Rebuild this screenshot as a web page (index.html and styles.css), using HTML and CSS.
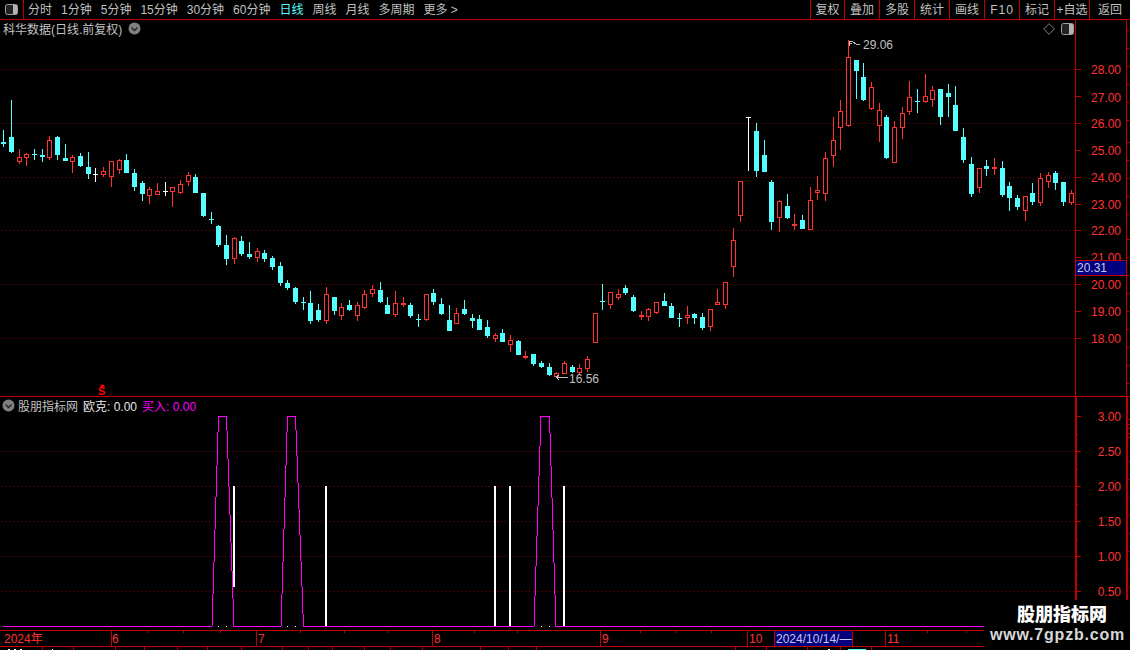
FILE: index.html
```html
<!DOCTYPE html>
<html lang="zh">
<head>
<meta charset="utf-8">
<title>科华数据</title>
<link rel="stylesheet" href="styles.css">
</head>
<body>
<div class="app">
  <header class="toolbar">
    <div class="toggle-cell">
      <svg class="icon-toggle" width="13" height="11" viewBox="0 0 13 11"><rect x="0.5" y="0.5" width="12" height="10" rx="2" fill="#222" stroke="#a0a0a0"/><rect x="8" y="1" width="4" height="9" fill="#b4b4b4"/></svg>
    </div>
    <nav class="periods">
      <span>分时</span><span>1分钟</span><span>5分钟</span><span>15分钟</span><span>30分钟</span><span>60分钟</span><span class="active">日线</span><span>周线</span><span>月线</span><span>多周期</span><span>更多 &gt;</span>
    </nav>
    <nav class="actions">
      <span>复权</span><span>叠加</span><span>多股</span><span>统计</span><span>画线</span><span class="wide">F10</span><span>标记</span><span>+自选</span><span>返回</span>
    </nav>
  </header>

  <section class="pane price-pane">
    <div class="legend">
      <span>科华数据(日线.前复权)</span>
      <svg class="chev" width="13" height="13" viewBox="0 0 13 13"><circle cx="6.5" cy="6.5" r="6" fill="#808080"/><path d="M3.5 5.5l3 3 3-3" fill="none" stroke="#222" stroke-width="1.3"/></svg>
    </div>
    <div class="pane-tools">
      <svg width="12" height="12" viewBox="0 0 12 12"><path d="M6 .7L11.3 6 6 11.3.7 6z" fill="none" stroke="#808080"/></svg>
      <svg width="13" height="12" viewBox="0 0 13 12"><rect x="0.5" y="0.5" width="12" height="11" rx="2" fill="#222" stroke="#a0a0a0"/><rect x="8" y="1" width="4" height="10" fill="#b4b4b4"/></svg>
    </div>
    <svg class="chart" width="1130" height="377" viewBox="0 20 1130 377">
      <g class="grid">
        <line x1="1" x2="1075" y1="69.5" y2="69.5"/><line x1="1" x2="1075" y1="123.5" y2="123.5"/><line x1="1" x2="1075" y1="177.5" y2="177.5"/><line x1="1" x2="1075" y1="230.5" y2="230.5"/><line x1="1" x2="1075" y1="284.5" y2="284.5"/><line x1="1" x2="1075" y1="338.5" y2="338.5"/>
      </g>
      <g id="candles"></g>
      <g class="axis">
        <path d="M1075.5 20V397M1126.5 20V397"/>
        <path d="M1075 69.5h6M1075 96.5h6M1075 123.5h6M1075 150.5h6M1075 177.5h6M1075 204.5h6M1075 230.5h6M1075 257.5h6M1075 284.5h6M1075 311.5h6M1075 338.5h6"/>
        <path d="M1127 30.5h2M1127 48.5h2M1127 66.5h2M1127 84.5h2M1127 102.5h2M1127 120.5h2M1127 142.5h4M1127 160.5h2M1127 178.5h2M1127 196.5h2M1127 214.5h2M1127 239.5h4M1127 257.5h2M1127 275.5h2M1127 293.5h2M1127 311.5h2M1127 329.5h2M1127 347.5h2M1127 365.5h2M1127 383.5h2"/>
      </g>
      <g class="scale">
        <text x="1121" y="74">28.00</text><text x="1121" y="102">27.00</text><text x="1121" y="128">26.00</text><text x="1121" y="155">25.00</text><text x="1121" y="182">24.00</text><text x="1121" y="209">23.00</text><text x="1121" y="235">22.00</text><text x="1121" y="262">21.00</text><text x="1121" y="289">20.00</text><text x="1121" y="316">19.00</text><text x="1121" y="343">18.00</text>
      </g>
      <rect class="price-box" x="1075.5" y="260.5" width="51" height="15"/>
      <text class="price-now" x="1077" y="272">20.31</text>
      <path class="mark" d="M849 46V41h4M849 43h3M853 42l3 2 4 0"/>
      <text class="mark-text" x="863" y="49">29.06</text>
      <path class="mark" d="M568 377H556M556 377l3-2M556 377l3 3"/>
      <text class="mark-text" x="569" y="383">16.56</text>
      <path class="signal" d="M102 384l3 3h-2v1h-2v-1h-2z"/>
      <text class="signal-s" x="98" y="395">S</text>
      <path class="divider" d="M0 396.5H1130"/>
    </svg>
  </section>

  <section class="pane indicator-pane">
    <div class="legend">
      <svg class="chev first" width="13" height="13" viewBox="0 0 13 13"><circle cx="6.5" cy="6.5" r="6" fill="#808080"/><path d="M3.5 5.5l3 3 3-3" fill="none" stroke="#222" stroke-width="1.3"/></svg>
      <span>股朋指标网</span>
      <span class="white">欧克: 0.00</span>
      <span class="magenta">买入: 0.00</span>
    </div>
    <svg class="chart" width="1130" height="233" viewBox="0 397 1130 233">
      <g class="grid">
        <line x1="1" x2="1075" y1="451.5" y2="451.5"/><line x1="1" x2="1075" y1="486.5" y2="486.5"/><line x1="1" x2="1075" y1="521.5" y2="521.5"/><line x1="1" x2="1075" y1="556.5" y2="556.5"/><line x1="1" x2="1075" y1="591.5" y2="591.5"/>
      </g>
      <g class="bars">
        <rect x="233" y="486" width="2" height="101"/><rect x="325" y="486" width="2" height="140"/><rect x="494" y="486" width="2" height="140"/><rect x="509" y="486" width="2" height="140"/><rect x="563" y="486" width="2" height="140"/>
        <rect x="218" y="626" width="1" height="1"/><rect x="226" y="626" width="1" height="1"/><rect x="287" y="626" width="1" height="1"/><rect x="295" y="626" width="1" height="1"/><rect x="541" y="626" width="1" height="1"/><rect x="549" y="626" width="1" height="1"/>
      </g>
      <path class="line-magenta" d="M3 626.5H212L218.5 416.5H226.5L234 626.5H281L287.5 416.5H295.5L303.5 626.5H534L541 416.5H549.5L556 626.5H1130"/>
      <g class="axis thick">
        <path d="M1075.5 397V630M1126.5 397V630"/>
      </g>
      <g class="axis">
        <path d="M1075 416.5h6M1075 451.5h6M1075 486.5h6M1075 521.5h6M1075 556.5h6M1075 591.5h6M1075 434.5h3M1075 469.5h3M1075 504.5h3M1075 539.5h3M1075 574.5h3"/>
        <path d="M1127 419.5h3M1127 424.5h3M1127 428.5h3M1127 433.5h3M1127 437.5h3M1127 461.5h2M1127 479.5h2M1127 497.5h2M1127 515.5h2M1127 533.5h2M1127 551.5h2M1127 569.5h2M1127 587.5h2"/>
      </g>
      <g class="scale">
        <text x="1121" y="421">3.00</text><text x="1121" y="456">2.50</text><text x="1121" y="491">2.00</text><text x="1121" y="526">1.50</text><text x="1121" y="561">1.00</text><text x="1121" y="596">0.50</text>
      </g>
    </svg>
  </section>

  <footer class="pane date-pane">
    <svg class="chart" width="1130" height="20" viewBox="0 630 1130 20">
      <g class="axis">
        <path d="M0 630.5H1130M0 646.5H1130"/>
        <path d="M111 631V646M256.5 631V646M432.5 631V646M600.5 631V646M747.5 631V646M774.5 631V646M852.5 631V646M885.5 631V646"/>
        <path d="M147.5 631v2M183.5 631v2M220.5 631v2M300.5 631v2M344.5 631v2M388.5 631v2M474.5 631v2M517.5 631v2M640.5 631v2M675.5 631v2M711.5 631v2M927.5 631v2M966.5 631v2"/>
        <path d="M42.5 647v3M73.5 647v3M115.5 647v3M144.5 647v3M177.5 647v3M207.5 647v3M241.5 647v3M282.5 647v3M308.5 647v3M332.5 647v3M364.5 647v3M390.5 647v3M422.5 647v3M480.5 647v3M508.5 647v3M536.5 647v3M735.5 647v3M766.5 647v3M807.5 647v3M840.5 647v3M871.5 647v3"/>
      </g>
      <g class="dates">
        <text x="4" y="643">2024年</text><text x="112" y="643">6</text><text x="258" y="643">7</text><text x="434" y="643">8</text><text x="602" y="643">9</text><text x="749" y="643">10</text><text x="887" y="643">11</text>
      </g>
      <rect class="date-box" x="775" y="631" width="77" height="15"/>
      <text class="date-now" x="776" y="643">2024/10/14/—</text>
      <g class="crumbs">
        <rect x="8" y="649" width="2" height="1"/><rect x="14" y="649" width="2" height="1"/><rect x="20" y="649" width="2" height="1"/><rect x="52" y="649" width="1" height="1"/><rect x="828" y="649" width="2" height="1"/>
      </g>
      <rect class="crumb-cyan" x="848" y="649" width="18" height="1"/>
    </svg>
  </footer>

  <aside class="watermark">
    <strong>股朋指标网</strong>
    <b>www.7gpzb.com</b>
  </aside>
</div>
<script src="script.js"></script>
</body>
</html>
```

FILE: styles.css
```css
* { box-sizing: border-box; }
html, body { margin: 0; padding: 0; background: #000; }
body { font-family: "Liberation Sans", "Noto Sans CJK SC", sans-serif; font-size: 12px; color: #c0c0c0; }

.app {
  position: relative;
  width: 1130px;
  height: 650px;
  overflow: hidden;
  background: #000;
  display: flex;
  flex-direction: column;
}

.toolbar {
  flex: none;
  height: 20px;
  display: flex;
  align-items: stretch;
  border-bottom: 1px solid #c00000;
  line-height: 20px;
}
.toggle-cell {
  flex: none;
  width: 24px;
  display: flex;
  align-items: center;
  padding-left: 5px;
  padding-bottom: 1px;
  border-right: 1px solid #c00000;
}
.periods {
  flex: 1;
  display: flex;
  gap: 9px;
  padding-left: 4px;
  white-space: nowrap;
}
.periods .active { color: #54ffff; }
.actions {
  flex: none;
  width: 320px;
  display: grid;
  grid-template-columns: 34px repeat(7, 35px) 41px;
}
.actions span {
  border-left: 1px solid #c00000;
  text-align: center;
  white-space: nowrap;
}
.actions .wide { letter-spacing: 1px; }

.pane { position: relative; flex: none; }
.price-pane { height: 377px; }
.indicator-pane { height: 233px; }
.date-pane { height: 20px; }
.chart { display: block; shape-rendering: crispEdges; }

.legend {
  position: absolute;
  left: 3px;
  top: 0;
  display: flex;
  align-items: center;
  gap: 6px;
  height: 16px;
  white-space: nowrap;
}
.indicator-pane .legend { left: 2px; top: 0; height: 16px; gap: 5px; }
.indicator-pane .legend .chev.first { margin-right: -2px; }
.legend .white { color: #e6e6e6; }
.legend .magenta { color: #ff00ff; }
.chev { shape-rendering: auto; flex: none; }
.pane-tools {
  position: absolute;
  right: 56px;
  top: 3px;
  display: flex;
  gap: 6px;
  align-items: center;
}
.icon-toggle { display: block; }

.grid line { stroke: #8c0000; stroke-width: 1; stroke-dasharray: 1 3; }
.axis path { stroke: #c00000; stroke-width: 1; fill: none; }
.axis.thick path { stroke-width: 2; }
.divider { stroke: #c00000; stroke-width: 1; fill: none; }
.scale text { fill: #ff3232; font-size: 12px; text-anchor: end; shape-rendering: auto; }
.dates text { fill: #ff3232; font-size: 12px; }
.price-box { fill: #000080; stroke: #c00000; }
.price-now { fill: #c8c8e6; font-size: 12px; }
.date-box { fill: #000080; }
.date-now { fill: #c8c8e6; font-size: 12px; }
.mark { fill: none; stroke: #c0c0c0; stroke-width: 1; }
.mark-text { fill: #c0c0c0; font-size: 12px; }
.signal { fill: #ff0000; }
.signal-s { fill: #ff0000; font-size: 11px; font-weight: bold; }
.bars rect, .crumbs rect { fill: #fff; }
.crumb-cyan { fill: #54ffff; }
.line-magenta { fill: none; stroke: #ff00ff; stroke-width: 1; }

.candle-wick { stroke-width: 1; fill: none; }
.up { stroke: #ff3232; }
.down { stroke: #54ffff; }
.flat { stroke: #fff; }
.body-hollow { fill: #000; stroke: #ff3232; stroke-width: 1; }
.body-red { fill: #ff3232; }
.body-cyan { fill: #54ffff; }
.body-white { fill: #fff; }

.watermark {
  position: absolute;
  left: 984px;
  top: 600px;
  width: 146px;
  height: 50px;
  background: #000;
  display: flex;
  flex-direction: column;
  align-items: center;
  font-weight: bold;
}
.watermark strong { font-size: 18px; line-height: 24px; margin: 3px 0 -1px 10px; color: #fff; }
.watermark b { font-size: 16px; line-height: 18px; margin-left: 1px; color: #d8d8d8; letter-spacing: 0.8px; }
```

FILE: script.js
```js
// Candles measured from the reference: [zx, wickTop, wickBottom, bodyTop, bodyBottom, kind]
// Values are in 3x units relative to each group's origin.
var groups = [
  { ox: 0, oy: 90, rows: [
    [10,120,170,155,162,'c'],[34,30,188,141,186,'c'],[58,177,221,202,215,'r'],[79,190,228,193,203,'r'],
    [103,177,210,192,192,'c'],[127,177,216,195,201,'c'],[148,138,210,150,204,'r'],[172,138,210,141,195,'c'],
    [196,162,213,204,213,'c'],[217,195,249,202,215,'r'],[241,189,231,198,228,'c'],[265,186,267,231,252,'c'],
    [286,234,276,253,253,'w'],[310,231,261,244,254,'r'],[334,213,291,214,261,'r'],[358,207,252,211,239,'r'],
    [379,192,249,210,249,'c'],[403,237,303,249,291,'c'],[427,273,333,279,312,'c'],[448,291,342,298,317,'r'],
    [472,279,315,304,314,'r'],[496,276,318,303,303,'w'],[517,291,351,292,305,'r'],[541,270,312,283,308,'r'],
    [565,246,288,256,275,'r'],[586,252,309,261,309,'c'],[610,309,381,309,378,'c'],[634,366,402,388,388,'c'],
    [655,405,471,408,465,'c'],[679,435,525,465,507,'c'],[703,441,522,445,506,'r'],[724,438,498,453,492,'c'],
    [748,456,507,492,501,'c'],[772,474,516,484,503,'r'],[793,480,516,489,507,'c'],[817,498,540,504,531,'c'],
    [841,516,588,528,579,'c'],[861,570,600,579,594,'c'],[885,591,642,594,636,'c']
  ]},
  { ox: 280, oy: 270, rows: [
    [70,82,120,97,97,'c'],[91,63,162,99,153,'c'],[115,102,156,120,150,'c'],[139,51,162,72,153,'r'],
    [163,81,135,81,123,'c'],[184,99,150,112,137,'r'],[208,90,123,105,120,'c'],[232,96,153,105,137,'r'],
    [253,60,117,72,114,'r'],[277,45,81,57,72,'r'],[301,36,99,60,96,'c'],[322,81,132,105,132,'c'],
    [346,63,141,99,135,'r'],[370,81,111,99,105,'s'],[391,99,144,105,138,'c'],[415,132,171,147,147,'c'],
    [439,72,153,72,150,'r'],[460,57,105,69,96,'c'],[484,84,135,102,132,'c'],[508,105,183,150,183,'c'],
    [529,114,162,129,162,'r'],[553,90,135,117,132,'c'],[577,132,174,144,153,'c'],[598,135,180,147,180,'c'],
    [622,150,204,171,198,'c'],[646,189,216,195,207,'r'],[667,177,216,189,216,'c'],[691,195,246,210,225,'r'],
    [715,210,255,213,255,'c'],[736,243,267,258,264,'s'],[760,252,288,252,282,'c'],[784,273,294,279,291,'c'],
    [808,279,318,291,315,'c'],[829,306,324,310,321,'r'],[853,273,312,280,311,'r'],[877,285,309,291,306,'c'],
    [898,282,312,295,309,'r'],[922,258,306,267,297,'r'],[946,130,218,130,218,'r']
  ]},
  { ox: 580, oy: 110, rows: [
    [67,522,600,574,574,'c'],[91,547,597,547,586,'r'],[115,537,570,553,563,'r'],[136,525,555,534,549,'c'],
    [160,556,606,561,603,'c'],[184,603,630,615,621,'s'],[205,595,633,598,620,'r'],[229,576,612,577,608,'r'],
    [253,549,588,573,588,'c'],[274,579,624,588,624,'c'],[298,609,651,625,625,'c'],[322,588,642,615,623,'r'],
    [343,609,642,612,624,'c'],[367,609,660,621,654,'c'],[391,598,663,598,650,'r'],[412,537,585,577,584,'r'],
    [436,517,597,517,584,'r'],[460,354,501,391,470,'r'],[481,214,336,214,317,'r'],[505,22,183,22,22,'w'],
    [529,39,201,63,183,'c'],[553,90,186,135,186,'c'],[574,210,360,216,336,'c'],[598,270,366,274,323,'r'],
    [622,252,327,288,324,'c'],[643,312,360,342,348,'s'],[667,315,358,330,357,'c'],[691,232,359,271,359,'r'],
    [712,198,270,241,250,'r']
  ]},
  { ox: 820, oy: 40, rows: [
    [16,337,482,355,463,'r'],[40,232,380,301,347,'r'],[61,181,329,214,265,'r'],[85,0,262,52,257,'r'],
    [109,60,177,60,93,'c'],[130,69,183,111,180,'c'],[154,126,210,142,208,'r'],[178,190,305,211,257,'r'],
    [199,225,357,231,354,'c'],[223,244,370,262,368,'r'],[247,202,297,220,263,'r'],[268,123,225,172,215,'r'],
    [292,147,219,184,184,'c'],[316,102,189,169,185,'r'],[337,138,201,151,181,'r'],[361,147,255,147,231,'c'],
    [385,132,231,159,171,'c'],[406,138,273,195,273,'c'],[430,264,369,291,360,'c'],[454,351,471,372,462,'c'],
    [478,384,459,385,445,'r'],[499,360,408,378,387,'c'],[523,354,405,381,387,'s'],[547,363,471,384,465,'c'],
    [568,426,513,438,474,'c'],[592,465,510,474,501,'c'],[616,469,543,469,513,'r'],[637,429,495,459,486,'c'],
    [661,399,498,415,488,'r'],[685,396,444,406,425,'r'],[706,393,450,399,429,'c'],[730,426,498,426,486,'c'],
    [754,450,495,460,488,'r']
  ]}
];

var NS = 'http://www.w3.org/2000/svg';
var host = document.getElementById('candles');

function el(name, attrs) {
  var node = document.createElementNS(NS, name);
  for (var k in attrs) node.setAttribute(k, attrs[k]);
  host.appendChild(node);
}

groups.forEach(function (g) {
  g.rows.forEach(function (r) {
    var cx = g.ox + Math.floor(r[0] / 3);
    var wt = g.oy + Math.round(r[1] / 3);
    var wb = g.oy + Math.round(r[2] / 3);
    var bt = g.oy + Math.round(r[3] / 3);
    var bb = g.oy + Math.round(r[4] / 3);
    var kind = r[5];
    var wickClass = kind === 'c' ? 'down' : kind === 'w' ? 'flat' : 'up';
    el('line', { x1: cx + 0.5, x2: cx + 0.5, y1: wt, y2: wb, 'class': 'candle-wick ' + wickClass });
    if (kind === 'r') {
      el('rect', { x: cx - 1.5, y: bt + 0.5, width: 4, height: Math.max(bb - bt - 1, 1), 'class': 'body-hollow' });
    } else {
      var cls = kind === 'c' ? 'body-cyan' : kind === 'w' ? 'body-white' : 'body-red';
      el('rect', { x: cx - 2, y: bt, width: 5, height: Math.max(bb - bt, 1), 'class': cls });
    }
  });
});
```
